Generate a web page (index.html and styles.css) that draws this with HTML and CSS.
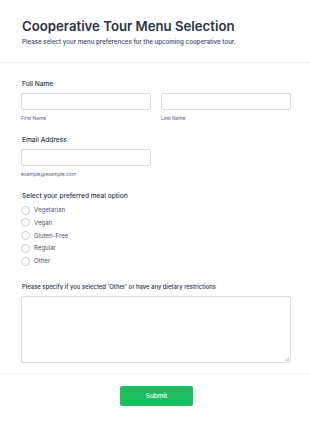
FILE: index.html
```html
<!DOCTYPE html>
<html>
<head>
<meta charset="utf-8">
<link rel="stylesheet" href="styles.css">
</head>
<body>
<div class="page">
  <header class="header">
    <h1 class="title">Cooperative Tour Menu Selection</h1>
    <p class="subtitle">Please select your menu preferences for the upcoming cooperative tour.</p>
  </header>
  <form class="form">
    <div class="field">
      <div class="label">Full Name</div>
      <div class="name-row">
        <div class="sub">
          <div class="input"></div>
          <div class="hint">First Name</div>
        </div>
        <div class="sub">
          <div class="input"></div>
          <div class="hint">Last Name</div>
        </div>
      </div>
    </div>
    <div class="field">
      <div class="label">Email Address</div>
      <div class="input email"></div>
      <div class="hint">example@example.com</div>
    </div>
    <div class="field field-radios">
      <div class="label">Select your preferred meal option</div>
      <div class="radios">
        <div class="radio"><span class="circle"></span><span>Vegetarian</span></div>
        <div class="radio"><span class="circle"></span><span>Vegan</span></div>
        <div class="radio"><span class="circle"></span><span>Gluten-Free</span></div>
        <div class="radio"><span class="circle"></span><span>Regular</span></div>
        <div class="radio"><span class="circle"></span><span>Other</span></div>
      </div>
    </div>
    <div class="field last">
      <div class="label label-small">Please specify if you selected 'Other' or have any dietary restrictions</div>
      <div class="textarea"><span class="grip"></span></div>
    </div>
  </form>
  <footer class="footer">
    <button class="submit" type="button">Submit</button>
  </footer>
</div>
</body>
</html>
```
FILE: styles.css
```css
* { box-sizing: border-box; }
html, body { margin: 0; padding: 0; background: #fff; }
body { font-family: Inter, "Noto Sans", sans-serif; color: #2c3345; }
.page { width: 310px; }
.header {
  padding: 17px 22px 15px;
  border-bottom: 1px solid #eef0f4;
}
.title {
  margin: 0;
  font-size: 13.2px;
  font-weight: 600;
  line-height: 18px;
  color: #2c3345;
}
.subtitle {
  margin: 2px 0 0;
  font-size: 6.2px;
  line-height: 10px;
  color: #3a4663;
  font-weight: 500;
}
.form { padding: 16px 19px 10px 21px; display: flex; flex-direction: column; }
.field { display: flex; flex-direction: column; margin-bottom: 13px; }
.field-radios { margin-bottom: 16px; }
.field.last { margin-bottom: 0; }
.label { font-size: 6.6px; line-height: 10px; font-weight: 500; color: #2c3345; margin: 0 0 4px 1px; }
.label-small { font-size: 5.9px; }
.name-row { display: flex; gap: 10px; }
.sub { flex: 1; display: flex; flex-direction: column; }
.input {
  height: 17px;
  border: 1px solid #d8dbe2;
  border-radius: 2px;
  background: #fff;
}
.input.email { width: 130px; }
.hint { font-size: 4.9px; line-height: 8px; color: #57647e; margin-top: 4px; }
.radios { display: flex; flex-direction: column; gap: 2.75px; }
.radio { display: flex; align-items: center; gap: 4px; font-size: 6.1px; line-height: 10px; color: #4a5264; }
.circle {
  width: 9px; height: 9px; border-radius: 50%;
  border: 1px solid #c9ccd4; background: #fff;
}
.textarea {
  position: relative;
  height: 67px;
  border: 1px solid #d8dbe2;
  border-radius: 2px;
}
.grip {
  position: absolute; right: 1px; bottom: 1px;
  width: 4px; height: 4px;
  background: linear-gradient(135deg, transparent 45%, #c2c5cc 45%, #c2c5cc 55%, transparent 55%, transparent 75%, #c2c5cc 75%);
}
.footer {
  border-top: 1px solid #eef0f4;
  display: flex; justify-content: center;
  padding: 12px 0 16px;
}
.submit {
  width: 73px; height: 20px;
  margin-left: 3px;
  background: #1dbe5d; color: #fff;
  border: none; border-radius: 2px;
  font-family: Inter, sans-serif; font-size: 6.4px; font-weight: 500;
}
```
